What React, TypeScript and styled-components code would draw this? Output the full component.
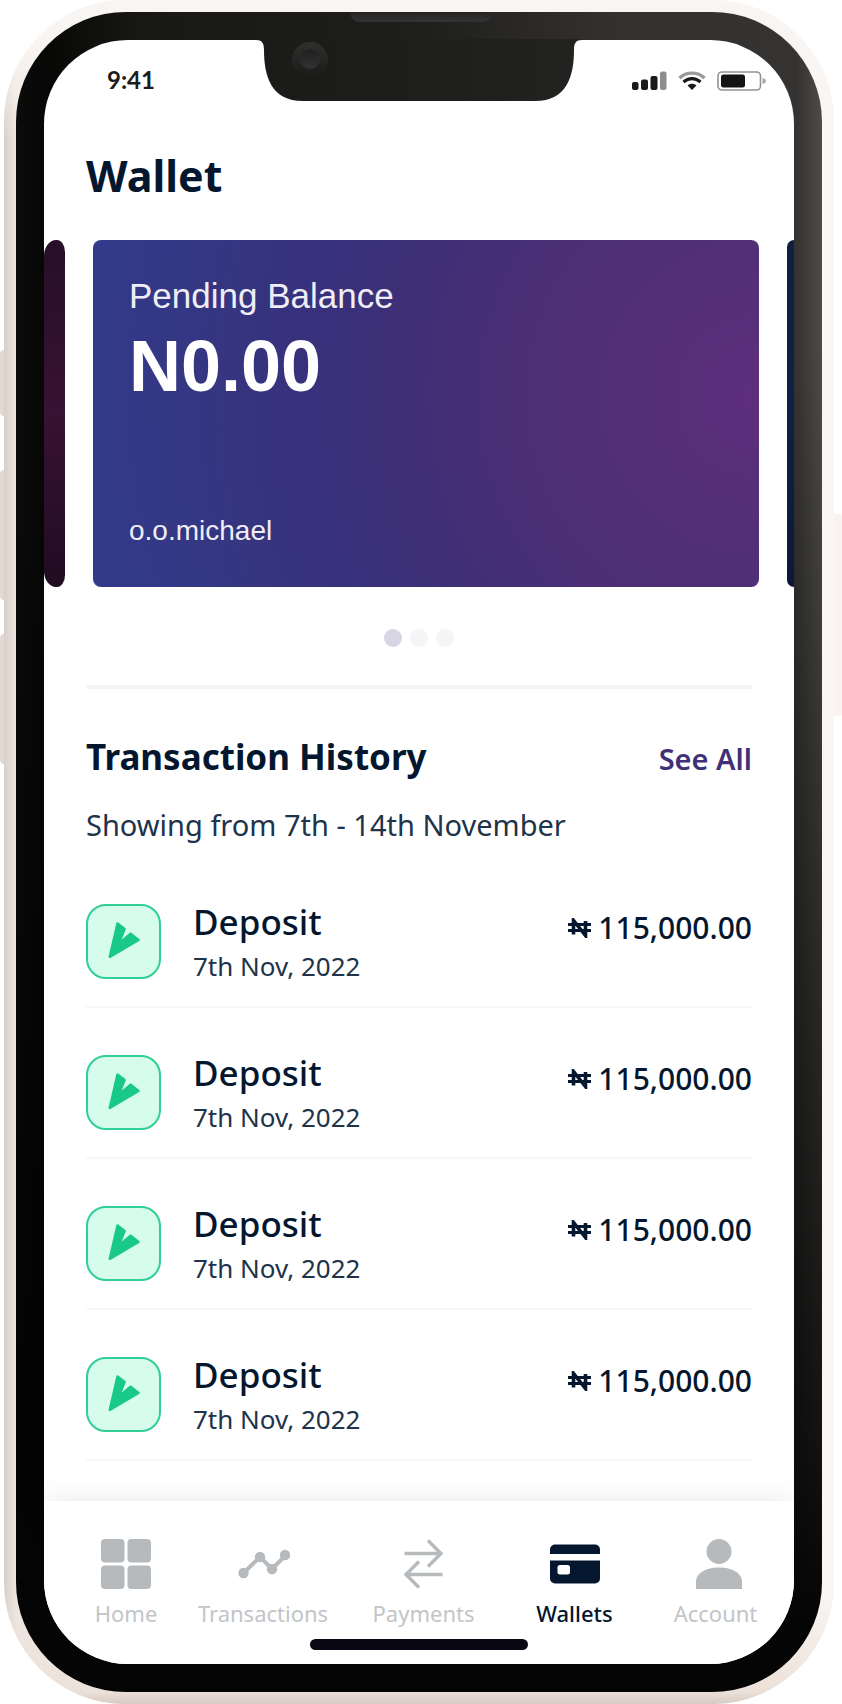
import React, { useState } from "react";
import styled, { createGlobalStyle } from "styled-components";

const ink = "#04172f";
const muted = "#b6babd";
const rule = "#f3f4f5";

const GlobalStyle = createGlobalStyle`
  *, *::before, *::after { box-sizing: border-box; }
  body {
    margin: 0;
    background: #fff;
    color: ${ink};
    font-family: "Noto Sans", "Open Sans", sans-serif;
  }
  h1, h2, h3, p, ul { margin: 0; padding: 0; }
  ul { list-style: none; }
  a { color: inherit; text-decoration: none; }
  svg { display: block; flex: none; }
`;

/* ---------- Device ---------- */

const Device = styled.div`
  position: relative;
  padding: 0 8px 0 4px;
`;

const SideButton = styled.span<{ $top: number; $height: number; $side: "left" | "right" }>`
  position: absolute;
  top: ${(p) => p.$top}px;
  ${(p) => p.$side}: 0;
  width: ${(p) => (p.$side === "left" ? 6 : 10)}px;
  height: ${(p) => p.$height}px;
  border-radius: ${(p) => (p.$side === "left" ? "4px 0 0 4px" : "0 2px 2px 0")};
  background: ${(p) => (p.$side === "left" ? "#e2d9d4" : "#f9f4f1")};
`;

const Frame = styled.div`
  position: relative;
  padding: 12px;
  border-radius: 121px;
  background:
    linear-gradient(180deg, #f9f5f2 0, #f9f5f2 40px, rgba(249, 245, 242, 0) 140px),
    linear-gradient(0deg, #d6cac2 0, #ece1d9 12px, rgba(236, 225, 217, 0) 110px),
    linear-gradient(90deg, #d9cfc9 0, #eee5df 12px, #faf6f3 90px);
`;

const Bezel = styled.div`
  position: relative;
  padding: 28px;
  border-radius: 110px;
  background:
    linear-gradient(180deg, rgba(0, 0, 0, 0) 0, rgba(0, 0, 0, 0) 20%, rgba(0, 0, 0, 0.35) 50%, rgba(0, 0, 0, 0.75) 85%, #050505 96%),
    linear-gradient(90deg, #0c0c0c 0, #070706 28px, #181816 16%, #1e1e1c 50%, #343230 75%, #343331 780px, #4c4b48 100%);
`;

const Notch = styled.svg`
  position: absolute;
  top: 0;
  left: 50%;
  transform: translateX(-50%);
`;

const Screen = styled.main`
  display: flex;
  flex-direction: column;
  border-radius: 84px;
  overflow: hidden;
  background: #fff;
`;

const StatusBar = styled.div`
  display: flex;
  justify-content: space-between;
  align-items: center;
  padding: 24px 28px 0 63px;
`;

const Clock = styled.time`
  font: 700 24px/32px Lato, sans-serif;
  color: #1c1c1c;
`;

const StatusIcons = styled.div`
  display: flex;
  align-items: center;
  gap: 11px;
  padding-top: 2px;
`;

/* ---------- Wallet ---------- */

const Title = styled.h1`
  margin-top: 54px;
  padding: 0 42px;
  font-size: 43px;
  line-height: 52px;
  font-weight: 700;
`;

const Carousel = styled.section`
  display: flex;
  gap: 28px;
  margin-top: 38px;
`;

const PreviousCard = styled.div`
  width: 21px;
  border-radius: 12px 8px 8px 12px / 16px 12px 12px 16px;
  background: linear-gradient(#260f27, #381232 50%, #200c22);
`;

const NextCard = styled.div`
  width: 7px;
  border-radius: 8px 0 0 8px;
  background: linear-gradient(#101e42, #0f2046 50%, #0d1838);
`;

const BalanceCard = styled.article`
  display: flex;
  flex: 1;
  flex-direction: column;
  min-height: 347px;
  padding: 36px 36px 40px;
  border-radius: 8px;
  color: #fff;
  font-family: "Liberation Sans", Arial, sans-serif;
  background: radial-gradient(
    circle at 100% 45%,
    #5d2e7c 0,
    #532f77 20%,
    #4a2f75 37%,
    #3e2f77 52%,
    #37317c 66%,
    #353681 80%,
    #323a8a 97%
  );
`;

const CardLabel = styled.h2`
  font-size: 35px;
  line-height: 40px;
  font-weight: 400;
  color: #efedf6;
`;

const Balance = styled.p`
  margin-top: 14px;
  font-size: 72px;
  line-height: 72px;
  font-weight: 700;
`;

const CardOwner = styled.p`
  margin-top: auto;
  font-size: 28px;
  line-height: 32px;
  color: #efedf6;
`;

const Dots = styled.div`
  display: flex;
  justify-content: center;
  gap: 8px;
  margin-top: 42px;
`;

const Dot = styled.button<{ $active: boolean }>`
  width: 18px;
  height: 18px;
  padding: 0;
  border: 0;
  border-radius: 50%;
  background: ${(p) => (p.$active ? "#d7d5e3" : "#f3f5f7")};
`;

/* ---------- History ---------- */

const History = styled.section`
  margin: 38px 42px 0;
  padding-top: 46px;
  border-top: 4px solid ${rule};
`;

const HistoryHeader = styled.header`
  display: flex;
  justify-content: space-between;
  align-items: baseline;
`;

const HistoryTitle = styled.h2`
  font-size: 35px;
  line-height: 44px;
  font-weight: 700;
`;

const SeeAll = styled.a`
  font-size: 29px;
  line-height: 36px;
  font-weight: 600;
  color: #3f3077;
`;

const Period = styled.p`
  margin-top: 28px;
  font-size: 29px;
  line-height: 36px;
  color: #20334a;
`;

const TransactionList = styled.ul`
  margin-top: 14px;
`;

const Transaction = styled.li`
  display: flex;
  align-items: center;
  gap: 32px;
  padding: 43px 0 24px;
  border-bottom: 2px solid #f7f7f8;
`;

const DepositBadge = styled.span`
  display: flex;
  align-items: center;
  justify-content: center;
  width: 75px;
  height: 75px;
  border: 2px solid #2fcf96;
  border-radius: 20px;
  background: #d6fced;
`;

const Details = styled.div`
  flex: 1;
`;

const Kind = styled.h3`
  font-size: 35px;
  line-height: 44px;
  font-weight: 500;
`;

const DateText = styled.p`
  margin-top: 6px;
  font-size: 26px;
  line-height: 32px;
  color: #20334a;
`;

const Amount = styled.p`
  display: flex;
  align-items: center;
  align-self: flex-start;
  gap: 7px;
  margin-top: 10px;
  font-size: 30px;
  line-height: 36px;
  font-weight: 500;
`;

/* ---------- Tab bar ---------- */

const TabBar = styled.nav`
  margin-top: 40px;
  padding: 38px 0 14px;
  background: #fff;
  box-shadow: 0 0 24px rgba(20, 40, 30, 0.1);
`;

const Tabs = styled.ul`
  display: grid;
  grid-template-columns: 130fr 144fr 177fr 125fr 157fr;
  padding-left: 17px;
`;

const Tab = styled.a<{ $active: boolean }>`
  display: flex;
  flex-direction: column;
  align-items: center;
  gap: 10px;
  font-size: 22px;
  line-height: 28px;
  font-weight: ${(p) => (p.$active ? 500 : 400)};
  color: ${(p) => (p.$active ? ink : "#c2c5c8")};

  svg { color: ${(p) => (p.$active ? ink : muted)}; }
`;

const HomeIndicator = styled.div`
  width: 29%;
  height: 11px;
  margin: 12px auto 0;
  border-radius: 6px;
  background: #0a0814;
`;

/* ---------- Icons ---------- */

const NotchShape = () => (
  <Notch width="326" height="90" viewBox="0 0 326 90" aria-hidden="true">
    <defs>
      <linearGradient id="notch" x1="0" x2="1" y1="0" y2="0">
        <stop offset="0" stopColor="#1a1a18" />
        <stop offset="1" stopColor="#222221" />
      </linearGradient>
      <linearGradient id="speaker" x1="0" x2="0" y1="0" y2="1">
        <stop offset="0" stopColor="#232323" />
        <stop offset="1" stopColor="#343434" />
      </linearGradient>
      <linearGradient id="lens" x1="0" x2="0" y1="0" y2="1">
        <stop offset="0" stopColor="#2f2f2e" />
        <stop offset="1" stopColor="#1a1a19" />
      </linearGradient>
      <linearGradient id="lensCore" x1="0" x2="0" y1="0" y2="1">
        <stop offset="0" stopColor="#1f1f1f" />
        <stop offset="1" stopColor="#323232" />
      </linearGradient>
    </defs>
    <path d="M0 28C6 28 8 31 8 38C8 64 15 89 47 89H279C311 89 318 64 318 38C318 31 320 28 326 28V27H0Z" fill="url(#notch)" />
    <path d="M94 0H236C236 7 231 10 225 10H105C99 10 94 7 94 0Z" fill="url(#speaker)" />
    <circle cx="54" cy="48" r="18" fill="url(#lens)" />
    <circle cx="54" cy="47" r="10" fill="url(#lensCore)" />
  </Notch>
);

const SignalIcon = () => (
  <svg width="35" height="20" viewBox="0 0 35 20" aria-label="Signal" role="img">
    <g fill="#191919">
      <rect x="0" y="11" width="6.500" height="8" rx="2" />
      <rect x="9" y="8.500" width="7" height="10.500" rx="2" />
      <rect x="18.500" y="5" width="7" height="14" rx="2" />
    </g>
    <rect x="28" y="0.500" width="6.500" height="18.500" rx="2" fill="#8d8d8d" />
  </svg>
);

const WifiIcon = () => (
  <svg width="28" height="20" viewBox="0 0 28 20" fill="none" aria-label="Wi-Fi" role="img">
    <path d="M1.500 7C8.500 0.500 19.500 0.500 26.500 7" stroke="#9a9a9a" strokeWidth="3.400" />
    <path d="M5.500 11C10.500 6.500 17.500 6.500 22.500 11" stroke="#191919" strokeWidth="3.200" />
    <path d="M14 19L9.500 14.500C12 12 16 12 18.500 14.500Z" fill="#191919" />
  </svg>
);

const BatteryIcon = () => (
  <svg width="49" height="20" viewBox="0 0 49 20" aria-label="Battery" role="img">
    <rect x="1" y="1" width="42.500" height="18" rx="4" fill="none" stroke="#929292" strokeWidth="1.600" />
    <rect x="4" y="3.500" width="24" height="13" rx="2.500" fill="#141414" />
    <path d="M45.500 7C48 7.500 49 9 49 10C49 11 48 12.500 45.500 13Z" fill="#a8a8a8" />
  </svg>
);

const DepositIcon = () => (
  <svg width="71" height="71" viewBox="0 0 71 71" aria-hidden="true">
    <path
      d="M29.500 17.500L36.600 23L30.500 38L42.600 27.600L50.500 34L21.800 50.800Z"
      fill="#19c88b"
      stroke="#19c88b"
      strokeWidth="2.500"
      strokeLinejoin="round"
    />
  </svg>
);

const NairaIcon = () => (
  <svg width="23" height="20" viewBox="0 0 23 20" fill="none" stroke={ink} role="img" aria-label="Naira">
    <path d="M0 6.500H23M0 12.500H23" strokeWidth="3" />
    <path d="M5.500 16.500V2.500L17.500 17.500V3" strokeWidth="3.600" />
  </svg>
);

const HomeIcon = () => (
  <svg width="50" height="50" viewBox="0 0 50 50" fill="currentColor" aria-hidden="true">
    <rect width="23.500" height="23.500" rx="4" />
    <rect x="26.500" width="23.500" height="23.500" rx="4" />
    <rect y="26.500" width="23.500" height="23.500" rx="4" />
    <rect x="26.500" y="26.500" width="23.500" height="23.500" rx="4" />
  </svg>
);

const TransactionsIcon = () => (
  <svg width="54" height="50" viewBox="0 0 54 50" fill="currentColor" aria-hidden="true">
    <path d="M7.500 34L24 18L36 30L50 16" fill="none" stroke="currentColor" strokeWidth="4" />
    <circle cx="7.500" cy="34" r="5.200" />
    <circle cx="24" cy="18" r="5.200" />
    <circle cx="36" cy="30" r="5.200" />
    <circle cx="49" cy="16" r="5.200" />
  </svg>
);

const PaymentsIcon = () => (
  <svg width="40" height="50" viewBox="0 0 40 50" fill="none" stroke="currentColor" strokeWidth="3.400" aria-hidden="true">
    <path d="M0.500 14.500H37M24 1.500L37 14.500L24 27.500" />
    <path d="M38.500 35.500H2M15 22.500L2 35.500L15 48.500" />
  </svg>
);

const WalletIcon = () => (
  <svg width="50" height="50" viewBox="0 0 50 50" fill="currentColor" aria-hidden="true">
    <path d="M5 5.500H45A5 5 0 0 1 50 10.500V15H0V10.500A5 5 0 0 1 5 5.500Z" />
    <path fillRule="evenodd" d="M0 21.500H50V39.500A5 5 0 0 1 45 44.500H5A5 5 0 0 1 0 39.500ZM10 26A2.500 2.500 0 0 0 7.500 28.500V33A2.500 2.500 0 0 0 10 35.500H17.500A2.500 2.500 0 0 0 20 33V28.500A2.500 2.500 0 0 0 17.500 26Z" />
  </svg>
);

const AccountIcon = () => (
  <svg width="54" height="50" viewBox="0 0 54 50" fill="currentColor" aria-hidden="true">
    <circle cx="30" cy="12.500" r="12.500" />
    <path d="M7 50V43C7 34 17 28.500 30 28.500C43 28.500 53 34 53 43V50Z" />
  </svg>
);

/* ---------- Data ---------- */

const transactions = [1, 2, 3, 4].map((id) => ({
  id,
  kind: "Deposit",
  date: "7th Nov, 2022",
  amount: "115,000.00",
}));

const tabs = [
  { label: "Home", Icon: HomeIcon },
  { label: "Transactions", Icon: TransactionsIcon },
  { label: "Payments", Icon: PaymentsIcon },
  { label: "Wallets", Icon: WalletIcon },
  { label: "Account", Icon: AccountIcon },
];

export default function App() {
  const [slide, setSlide] = useState(0);

  return (
    <>
      <GlobalStyle />
      <Device>
        <SideButton $side="left" $top={350} $height={66} />
        <SideButton $side="left" $top={470} $height={130} />
        <SideButton $side="left" $top={634} $height={130} />
        <SideButton $side="right" $top={514} $height={202} />
        <Frame>
          <Bezel>
            <Screen>
              <StatusBar>
                <Clock>9:41</Clock>
                <StatusIcons>
                  <SignalIcon />
                  <WifiIcon />
                  <BatteryIcon />
                </StatusIcons>
              </StatusBar>

              <Title>Wallet</Title>

              <Carousel aria-label="Balances">
                <PreviousCard />
                <BalanceCard>
                  <CardLabel>Pending Balance</CardLabel>
                  <Balance>N0.00</Balance>
                  <CardOwner>o.o.michael</CardOwner>
                </BalanceCard>
                <NextCard />
              </Carousel>
              <Dots>
                {[0, 1, 2].map((i) => (
                  <Dot
                    key={i}
                    type="button"
                    aria-label={`Show card ${i + 1}`}
                    $active={slide === i}
                    onClick={() => setSlide(i)}
                  />
                ))}
              </Dots>

              <History>
                <HistoryHeader>
                  <HistoryTitle>Transaction History</HistoryTitle>
                  <SeeAll href="#all">See All</SeeAll>
                </HistoryHeader>
                <Period>Showing from 7th - 14th November</Period>
                <TransactionList>
                  {transactions.map((t) => (
                    <Transaction key={t.id}>
                      <DepositBadge>
                        <DepositIcon />
                      </DepositBadge>
                      <Details>
                        <Kind>{t.kind}</Kind>
                        <DateText>{t.date}</DateText>
                      </Details>
                      <Amount>
                        <NairaIcon />
                        {t.amount}
                      </Amount>
                    </Transaction>
                  ))}
                </TransactionList>
              </History>

              <TabBar aria-label="Main">
                <Tabs>
                  {tabs.map(({ label, Icon }) => (
                    <li key={label}>
                      <Tab
                        href={`#${label.toLowerCase()}`}
                        $active={label === "Wallets"}
                        aria-current={label === "Wallets" ? "page" : undefined}
                      >
                        <Icon />
                        {label}
                      </Tab>
                    </li>
                  ))}
                </Tabs>
                <HomeIndicator />
              </TabBar>
            </Screen>
            <NotchShape />
          </Bezel>
        </Frame>
      </Device>
    </>
  );
}
